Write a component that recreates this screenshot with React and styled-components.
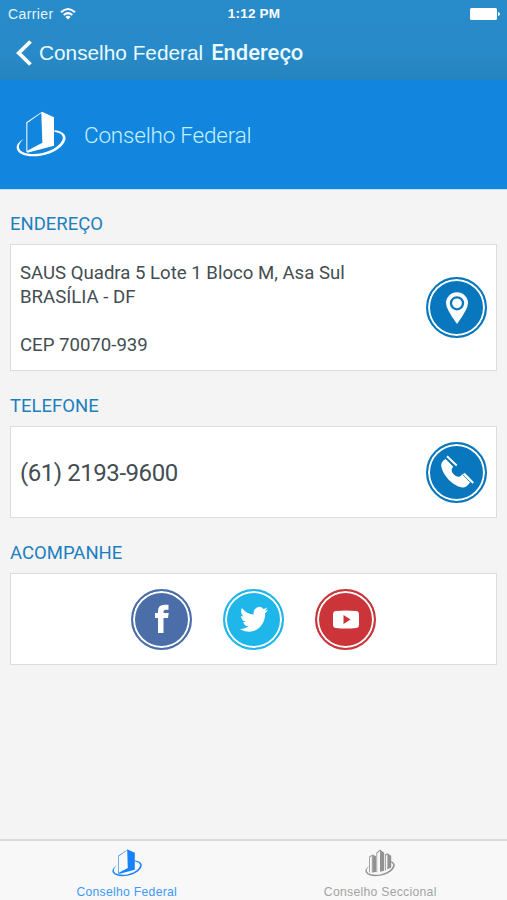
import React from 'react';
import styled, { createGlobalStyle } from 'styled-components';

const GlobalStyle = createGlobalStyle`
    * {
        box-sizing: border-box;
    }
    body {
        margin: 0;
        background: #f4f4f5;
        font-family: Roboto, sans-serif;
    }
`
const Screen = styled.div`
    display: flex;
    flex-direction: column;
    width: 100%;
    height: 100vh;
    overflow: hidden;
`
const TopBar = styled.header`
    height: 80px;
    flex: none;
    background: linear-gradient(#288bca 0%, #288ac8 65%, #2484be 100%);
    color: #fff;
`
const StatusBar = styled.div`
    display: grid;
    grid-template-columns: 1fr auto 1fr;
    align-items: center;
    height: 27px;
    padding: 0 7px 0 8px;
    font-family: "Liberation Sans", sans-serif;
    font-size: 14px;
`
const Carrier = styled.div`
    display: flex;
    align-items: center;
    gap: 6px;
    letter-spacing: 0.4px;
    color: #e3f5ff;
`
const Clock = styled.div`
    font-weight: bold;
    font-size: 13.5px;
    letter-spacing: 0.2px;
`
const Battery = styled.svg`
    justify-self: end;
    display: block;
`
const NavBar = styled.div`
    display: flex;
    align-items: center;
    height: 51px;
    padding-left: 16px;
    line-height: 24px;
`
const BackLabel = styled.span`
    margin-left: 7px;
    padding-top: 1px;
    font-family: "Liberation Sans", sans-serif;
    font-size: 20.8px;
    color: #eafaff;
`
const NavTitle = styled.span`
    margin-left: 8px;
    font-size: 22px;
    font-weight: 500;
    color: #eafaff;
`
const Banner = styled.div`
    display: flex;
    align-items: center;
    gap: 18px;
    height: 110px;
    flex: none;
    padding-left: 16px;
    background: #1286de;
    border-bottom: 1px solid #c6e1f5;
    color: #fff;
`
const BannerTitle = styled.h1`
    margin: 0;
    font-size: 22.5px;
    font-weight: 300;
    letter-spacing: -0.2px;
    color: #c4f1ff;
`
const Content = styled.main`
    flex: 1;
    padding: 0 10px;
`
const SectionTitle = styled.h2`
    margin: 0;
    padding-top: ${props => props.$top}px;
    height: ${props => props.$height}px;
    font-size: 18.5px;
    line-height: 22px;
    font-weight: 400;
    color: #1d7fbe;
`
const Card = styled.section`
    display: flex;
    align-items: center;
    justify-content: ${props => props.$center ? 'center' : 'space-between'};
    gap: ${props => props.$center ? '31px' : '0'};
    height: ${props => props.$height}px;
    padding: 0 9px;
    background: #fff;
    border: 1px solid #dadcde;
    color: #434d52;
`
const Address = styled.p`
    margin: 3px 0 0;
    font-size: 18.6px;
    line-height: 24.2px;
    white-space: pre-line;
`
const Phone = styled.p`
    margin: 1px 0 0;
    font-size: 24px;
    letter-spacing: -0.45px;
`
const Round = styled.button`
    display: flex;
    align-items: center;
    justify-content: center;
    flex: none;
    width: 61px;
    height: 61px;
    padding: 0;
    border: 2px solid ${props => props.$color};
    border-radius: 50%;
    background: ${props => props.$color};
    box-shadow: inset 0 0 0 2px #fff;
`
const TabBar = styled.nav`
    display: flex;
    flex: none;
    height: 61px;
    background: #f8f8f8;
    border-top: 2px solid #d9d9da;
`
const Tab = styled.a`
    display: flex;
    flex: 1;
    flex-direction: column;
    align-items: center;
    padding-top: 8px;
    font-family: "Liberation Sans", sans-serif;
    font-size: 12.2px;
    line-height: 14px;
    letter-spacing: 0.28px;
    color: ${props => props.$active ? '#3f98fa' : '#a3a3a3'};

    svg {
        margin-bottom: 8px;
        color: ${props => props.$active ? '#1783fb' : '#929292'};
    }
`

const Orbit = () => (
    <path d="M73 147C54 156 46 171 54 182C63 196 91 202 123 197C161 191 191 171 197 149C201 134 187 123 164 121L164 125C183 128 192 136 189 148C183 166 157 184 125 190C93 195 65 190 59 176C55 167 61 156 73 147Z" />
)

const TowerLogo = ({ width }) => (
    <svg width={width} height={width * 0.93} viewBox="49 63 150 139.5" fill="currentColor">
        <path d="M80 97L127 65L163 82V167L83 188L80 184ZM83 99V182L128 158L125 69Z" fillRule="evenodd" />
        <Orbit />
    </svg>
)

const TowersLogo = ({ width }) => (
    <svg width={width} height={width * 0.93} viewBox="49 63 150 139.5" fill="currentColor">
        <path d="M70 101L87 91V181L83 182V98L74 104V180H70Z" />
        <path d="M87 91L104 99V178L87 181Z" />
        <path d="M106 82L124 65L145 82V172L124 177V72L110 85V179H106Z" />
        <path d="M149 91L161 84L180 97V155L161 165V91L153 95V170H149Z" />
        <Orbit />
    </svg>
)

const social = [
    { name: 'Facebook', color: '#4b6ea9' },
    { name: 'Twitter', color: '#1fb6e9' },
    { name: 'YouTube', color: '#cb3438' },
]

const socialIcons = {
    Facebook: (
        <svg width="16" height="30" viewBox="0 0 16 30" fill="#fff">
            <path d="M4 29V14H1V9H4V7Q4 .7 10.5 .7H14.5V5.7H11.5Q9.5 5.7 9.5 8V9H14.7L14 14H9.5V29Z" />
        </svg>
    ),
    Twitter: (
        <svg width="28" height="26" viewBox="0 1.5 24 20.5" preserveAspectRatio="none" fill="#fff">
            <path d="M23.95 4.57a10 10 0 0 1-2.82.77 4.96 4.96 0 0 0 2.16-2.72 9.9 9.9 0 0 1-3.12 1.19 4.92 4.92 0 0 0-8.38 4.48A13.93 13.93 0 0 1 1.64 3.16a4.92 4.92 0 0 0 1.52 6.57 4.9 4.9 0 0 1-2.23-.61v.06a4.92 4.92 0 0 0 3.95 4.83 5 5 0 0 1-2.21.08 4.94 4.94 0 0 0 4.6 3.42A9.87 9.87 0 0 1 0 19.54a13.94 13.94 0 0 0 7.55 2.21c9.05 0 14-7.5 14-13.98 0-.21 0-.42-.02-.63a9.94 9.94 0 0 0 2.46-2.55z" />
        </svg>
    ),
    YouTube: (
        <svg width="26" height="19" viewBox="0 0 26 19">
            <path d="M3 1Q13 -.2 23 1Q25.7 1 26 4Q26.4 9.5 26 15Q25.7 18 23 18Q13 19.2 3 18Q.3 18 0 15Q-.4 9.5 0 4Q.3 1 3 1Z" fill="#fff" />
            <path d="M10.5 5L17.5 9.5L10.5 14Z" fill="#cb3438" />
        </svg>
    ),
}

export default function App() {
    return (
        <Screen>
            <GlobalStyle />
            <TopBar>
                <StatusBar>
                    <Carrier>
                        Carrier
                        <svg width="16" height="12" viewBox="0 0 16 12" fill="none" stroke="#fff" strokeWidth="2">
                            <path d="M1 4.3Q8 -2.2 15 4.3M3.7 7Q8 3.2 12.3 7" />
                            <path d="M8 11.5L5.4 8.9Q8 6.8 10.6 8.9Z" fill="#fff" stroke="none" />
                        </svg>
                    </Carrier>
                    <Clock>1:12 PM</Clock>
                    <Battery width="30" height="12" viewBox="0 0 30 12" fill="#fff">
                        <rect width="27" height="12" rx="1.5" />
                        <path d="M28 4Q30 4.5 30 6T28 8Z" />
                    </Battery>
                </StatusBar>
                <NavBar>
                    <svg width="16" height="26" viewBox="0 0 16 26" fill="none" stroke="#fff" strokeWidth="3.8">
                        <path d="M14.5 1.5L2.8 13L14.5 24.5" />
                    </svg>
                    <BackLabel>Conselho Federal</BackLabel>
                    <NavTitle>Endereço</NavTitle>
                </NavBar>
            </TopBar>
            <Banner>
                <TowerLogo width={50} />
                <BannerTitle>Conselho Federal</BannerTitle>
            </Banner>
            <Content>
                <SectionTitle $top={23} $height={54}>ENDEREÇO</SectionTitle>
                <Card $height={127}>
                    <Address>{'SAUS Quadra 5 Lote 1 Bloco M, Asa Sul\nBRASÍLIA - DF\n\nCEP 70070-939'}</Address>
                    <Round $color="#0877be" aria-label="Mapa">
                        <svg width="22" height="32" viewBox="0 0 22 32">
                            <path d="M11 32Q0 17 0 11A11 10.7 0 0 1 22 11Q22 17 11 32Z" fill="#fff" />
                            <circle cx="11" cy="11.3" r="6" fill="none" stroke="#0877be" strokeWidth="2.3" />
                        </svg>
                    </Round>
                </Card>
                <SectionTitle $top={24} $height={55}>TELEFONE</SectionTitle>
                <Card $height={92}>
                    <Phone>(61) 2193-9600</Phone>
                    <Round $color="#0877be" aria-label="Ligar">
                        <svg width="34" height="34" viewBox="0 0 34 34" fill="#fff">
                            <path d="M5.7 4L13.2 11.8Q10 15.4 13.2 18.8Q17.2 23.5 20.5 21L23.2 18.4L30.7 26.2Q27 32.7 22.2 32.5C12 30.7 2.3 19.5 1.2 10.5Q1 6.5 5.7 4Z" />
                            <path d="M7 1.2L16.7 10.4M24 18.5L33.2 28" stroke="#fff" strokeWidth="2" />
                            <path d="M5.8 3.2L15 12M22.7 19.6L31.8 28.8" stroke="#0877be" strokeWidth="0.8" />
                        </svg>
                    </Round>
                </Card>
                <SectionTitle $top={24} $height={55}>ACOMPANHE</SectionTitle>
                <Card $height={92} $center>
                    {social.map(item => (
                        <Round key={item.name} $color={item.color} aria-label={item.name}>
                            {socialIcons[item.name]}
                        </Round>
                    ))}
                </Card>
            </Content>
            <TabBar>
                <Tab $active>
                    <TowerLogo width={30} />
                    Conselho Federal
                </Tab>
                <Tab>
                    <TowersLogo width={30} />
                    Conselho Seccional
                </Tab>
            </TabBar>
        </Screen>
    );
}
